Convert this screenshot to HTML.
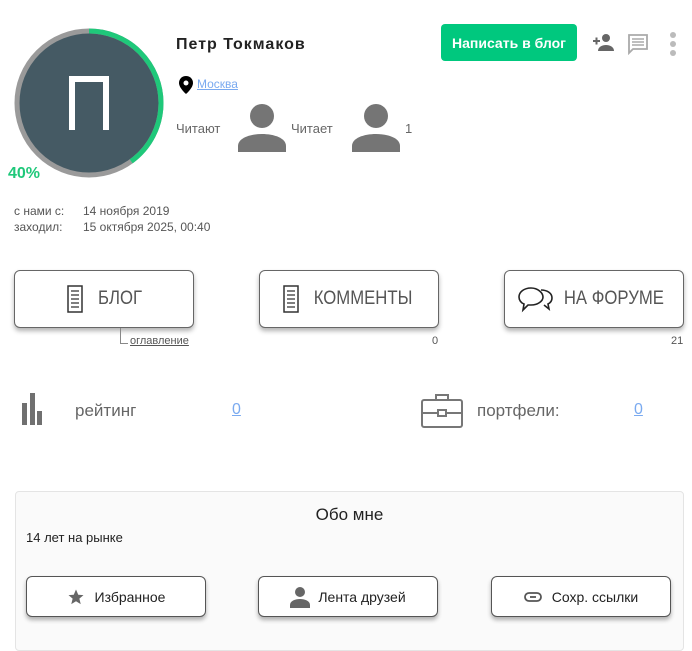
<!DOCTYPE html>
<html><head><meta charset="utf-8"><style>
*{margin:0;padding:0;box-sizing:border-box}
body{width:692px;height:640px;background:#fff;font-family:"Liberation Sans",sans-serif;position:relative;overflow:hidden;color:#333}
.a{position:absolute;white-space:nowrap}
.btn{position:absolute;border:1px solid #666;border-radius:6px;background:#fff;box-shadow:0 3px 5px rgba(0,0,0,.3);display:flex;align-items:center;justify-content:center;color:#555;font-size:19px}
.btn span{display:inline-block;transform:scaleX(.88)}
.sb{position:absolute;border:1px solid #555;border-radius:6px;background:#fff;box-shadow:0 3px 4px rgba(0,0,0,.3);display:flex;align-items:center;justify-content:center;font-size:14px;color:#222;height:41px;top:576px;width:180px}
.lk{color:#7aaaf0;text-decoration:underline}
</style></head><body>
<svg class="a" style="left:12px;top:26px" width="154" height="154" viewBox="0 0 154 154">
<circle cx="77" cy="77" r="72" fill="#455a64" stroke="#9a9a9a" stroke-width="5"/>
<circle cx="77" cy="77" r="72" fill="none" stroke="#1fc87a" stroke-width="5" stroke-dasharray="181 1000" transform="rotate(-90 77 77)"/>
<path d="M57 50h40v54h-6V56H63v48h-6z" fill="#fff"/>
</svg>
<div class="a" style="left:8px;top:165px;color:#1fc87a;font-weight:bold;font-size:16px">40%</div>
<div class="a" style="left:176px;top:36px;font-weight:bold;font-size:16px;letter-spacing:1px;color:#222">Петр Токмаков</div>
<div class="a" style="left:441px;top:24px;width:136px;height:37px;background:#00c87e;border-radius:4px;color:#fff;font-weight:bold;font-size:14px;display:flex;align-items:center;justify-content:center">Написать в блог</div>
<svg class="a" style="left:591px;top:32px" width="24" height="20" viewBox="0 0 24 20"><path d="M2 9h7M5.5 5.5v7" stroke="#666" stroke-width="2"/><circle cx="15" cy="6" r="4" fill="#666"/><path d="M7 19c0-4 4-6 8-6s8 2 8 6z" fill="#666"/></svg>
<svg class="a" style="left:627px;top:33px" width="22" height="22" viewBox="0 0 22 22"><path d="M2 2h18v14H6l-4 4z" fill="none" stroke="#aaa" stroke-width="1.8"/><path d="M5 6h12M5 9h12M5 12h12" stroke="#aaa" stroke-width="1.5"/></svg>
<svg class="a" style="left:669px;top:31px" width="8" height="26"><circle cx="4" cy="4" r="3" fill="#bbb"/><circle cx="4" cy="13" r="3" fill="#bbb"/><circle cx="4" cy="22" r="3" fill="#bbb"/></svg>
<svg class="a" style="left:179px;top:76px" width="14" height="18" viewBox="0 0 14 18"><path d="M7 0C3 0 0 3 0 7c0 5 7 11 7 11s7-6 7-11c0-4-3-7-7-7z" fill="#000"/><circle cx="7" cy="7" r="2.5" fill="#fff"/></svg>
<div class="a lk" style="left:197px;top:77px;font-size:12px">Москва</div>
<div class="a" style="left:176px;top:121px;font-size:13px;color:#666">Читают</div>
<svg class="a" style="left:238px;top:104px" width="48" height="48" viewBox="0 0 48 48"><circle cx="24" cy="12" r="12" fill="#757575"/><path d="M0 48v-6c0-8 12-12 24-12s24 4 24 12v6z" fill="#757575"/></svg>
<div class="a" style="left:291px;top:121px;font-size:13px;color:#666">Читает</div>
<svg class="a" style="left:352px;top:104px" width="48" height="48" viewBox="0 0 48 48"><circle cx="24" cy="12" r="12" fill="#757575"/><path d="M0 48v-6c0-8 12-12 24-12s24 4 24 12v6z" fill="#757575"/></svg>
<div class="a" style="left:405px;top:121px;font-size:13px;color:#666">1</div>
<div class="a" style="left:14px;top:204px;font-size:12px;color:#555">с нами с:</div>
<div class="a" style="left:83px;top:204px;font-size:12px;color:#555">14 ноября 2019</div>
<div class="a" style="left:14px;top:220px;font-size:12px;color:#555">заходил:</div>
<div class="a" style="left:83px;top:220px;font-size:12px;color:#555">15 октября 2025, 00:40</div>
<div class="btn" style="left:14px;top:270px;width:180px;height:58px"><svg width="24" height="30" viewBox="0 0 24 30" style="margin-right:8px"><path d="M5 2h14v26H5z" fill="none" stroke="#333" stroke-width="1.5"/><path d="M8 7h8M8 11h8M8 15h8M8 19h8M8 23h8" stroke="#333" stroke-width="1.2"/></svg><span>БЛОГ</span></div>
<div class="btn" style="left:259px;top:270px;width:180px;height:58px"><svg width="24" height="30" viewBox="0 0 24 30" style="margin-right:4px"><path d="M5 2h14v26H5z" fill="none" stroke="#333" stroke-width="1.5"/><path d="M8 7h8M8 11h8M8 15h8M8 19h8M8 23h8" stroke="#333" stroke-width="1.2"/></svg><span>КОММЕНТЫ</span></div>
<div class="btn" style="left:504px;top:270px;width:180px;height:58px"><svg width="38" height="30" viewBox="0 0 38 30" style="margin-right:2px"><path d="M14 4c-7 0-12 4-12 9 0 3 2 6 5 7l-1 6 5-5c1 0 2 0 3 0 7 0 12-4 12-8s-5-9-12-9z" fill="none" stroke="#222" stroke-width="1.6"/><path d="M24 6c6 0 11 3 11 8 0 3-2 5-4 6l1 5-5-4" fill="none" stroke="#222" stroke-width="1.6"/></svg><span>НА ФОРУМЕ</span></div>
<div class="a" style="left:120px;top:328px;width:8px;height:16px;border-left:1px solid #888;border-bottom:1px solid #888"></div>
<div class="a" style="left:130px;top:335px;font-size:11px;color:#555;text-decoration:underline">оглавление</div>
<div class="a" style="left:432px;top:335px;font-size:11px;color:#555">0</div>
<div class="a" style="left:671px;top:335px;font-size:11px;color:#555">21</div>
<svg class="a" style="left:22px;top:393px" width="20" height="32"><rect x="0" y="10" width="5" height="22" fill="#707070"/><rect x="8" y="0" width="5" height="32" fill="#707070"/><rect x="15" y="18" width="5" height="14" fill="#707070"/></svg>
<div class="a" style="left:75px;top:401px;font-size:17px;color:#666">рейтинг</div>
<div class="a lk" style="left:232px;top:401px;font-size:16px">0</div>
<svg class="a" style="left:421px;top:393px" width="42" height="35" viewBox="0 0 42 35"><path d="M15 7V2h12v5" fill="none" stroke="#777" stroke-width="2"/><rect x="1" y="7" width="40" height="27" rx="2" fill="none" stroke="#777" stroke-width="2"/><path d="M1 20h16M25 20h16" stroke="#777" stroke-width="2"/><rect x="17" y="17" width="8" height="6" fill="none" stroke="#777" stroke-width="2"/></svg>
<div class="a" style="left:477px;top:401px;font-size:17px;color:#666">портфели:</div>
<div class="a lk" style="left:634px;top:401px;font-size:16px">0</div>
<div class="a" style="left:15px;top:491px;width:669px;height:160px;background:#fafafa;border:1px solid #e4e4e4;border-radius:4px"></div>
<div class="a" style="left:15px;top:505px;width:669px;text-align:center;font-size:17px;color:#222">Обо мне</div>
<div class="a" style="left:26px;top:530px;font-size:13px;color:#222">14 лет на рынке</div>
<div class="sb" style="left:26px"><svg width="18" height="18" viewBox="0 0 24 24" style="margin-right:10px"><path d="M12 2l3 7 7 .5-5.5 4.7 1.8 7.3L12 17.6 5.7 21.5l1.8-7.3L2 9.5 9 9z" fill="#666"/></svg>Избранное</div>
<div class="sb" style="left:258px"><svg width="20" height="22" viewBox="0 0 20 22" style="margin-right:8px"><circle cx="10" cy="6" r="5" fill="#666"/><path d="M0 22v-3c0-4 5-6 10-6s10 2 10 6v3z" fill="#666"/></svg>Лента друзей</div>
<div class="sb" style="left:491px"><svg width="18" height="10" viewBox="0 0 18 10" style="margin-right:10px"><rect x="1" y="1" width="16" height="8" rx="4" fill="none" stroke="#555" stroke-width="1.8"/><path d="M6 5h6" stroke="#555" stroke-width="1.8"/></svg>Сохр. ссылки</div>
</body></html>
